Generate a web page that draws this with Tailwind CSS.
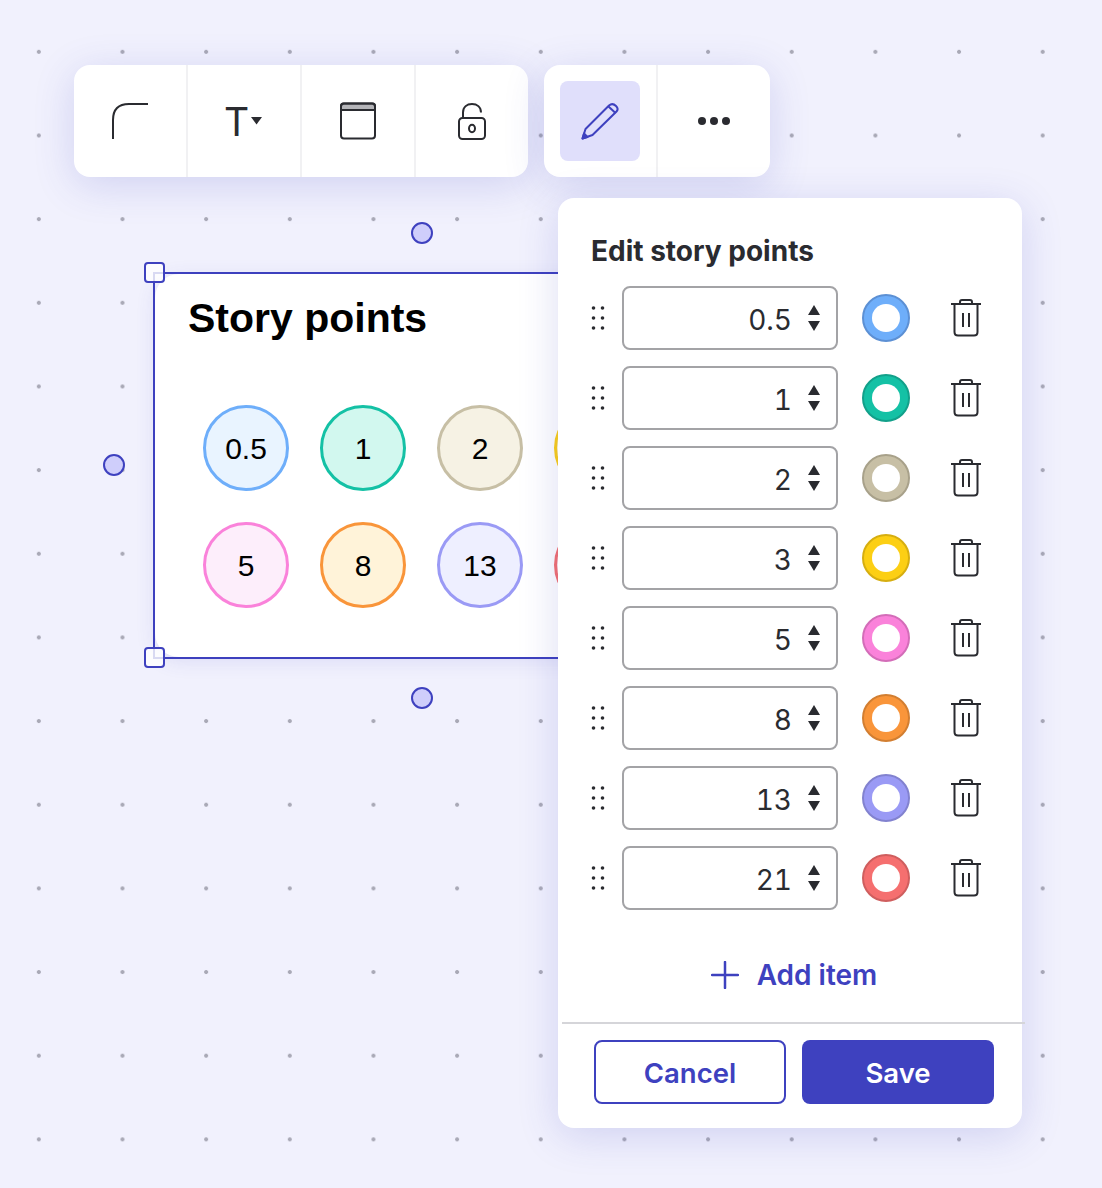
<!DOCTYPE html>
<html lang="en">
<head>
    <meta charset="UTF-8">
    <meta name="viewport" content="width=device-width, initial-scale=1.0">
    <title>Edit story points</title>
    <script src="https://cdn.jsdelivr.net/npm/@tailwindcss/browser@4"></script>
</head>
<body class="bg-[#f1f1fd] font-['Inter',sans-serif] text-[#2a2b30]">

    <!-- Canvas with dot grid -->
    <div class="relative w-[1102px] h-[1188px] overflow-hidden bg-[radial-gradient(circle,#a9a9b6_1.6px,transparent_2.3px)] bg-[size:83.67px_83.67px] bg-[position:-3px_10px]">

        <!-- Selected widget -->
        <div class="absolute left-[153px] top-[272px] w-[538px] h-[387px] border-2 border-[#3e41bf]">
            <div class="h-full bg-white rounded-l-[24px] pl-[33px] pt-[19px] shadow-[0_4px_20px_rgba(62,65,191,0.12)]">
                <h2 class="font-['Liberation_Sans',sans-serif] font-bold text-[41px] leading-[50px] text-black">Story points</h2>
                <div id="circles" class="grid grid-cols-[repeat(4,86px)] gap-x-[31px] gap-y-[31px] ml-[15px] mt-[62px]"></div>
            </div>
        </div>

        <!-- Selection handles -->
        <div class="absolute left-[144px] top-[262px] size-[21px] rounded-[4px] border-2 border-[#3e41bf] bg-white/80"></div>
        <div class="absolute left-[144px] top-[647px] size-[21px] rounded-[4px] border-2 border-[#3e41bf] bg-white/80"></div>
        <div class="absolute left-[411px] top-[222px] size-[22px] rounded-full border-2 border-[#3e41bf] bg-[#cfcefb]"></div>
        <div class="absolute left-[411px] top-[687px] size-[22px] rounded-full border-2 border-[#3e41bf] bg-[#cfcefb]"></div>
        <div class="absolute left-[103px] top-[454px] size-[22px] rounded-full border-2 border-[#3e41bf] bg-[#cfcefb]"></div>

        <!-- Toolbars -->
        <div class="absolute left-[74px] top-[65px] flex gap-4">
            <div class="flex h-[112px] w-[454px] rounded-2xl bg-white shadow-[0_8px_40px_rgba(62,65,191,0.18)]">
                <div class="flex w-[114px] items-center justify-center border-r-2 border-[#f1f1f3]">
                    <svg width="40" height="40" viewBox="0 0 40 40" fill="none" stroke="#2a2b30" stroke-width="2"><path d="M3 38V19Q3 3 19 3H38"/></svg>
                </div>
                <div class="flex w-[114px] items-center justify-center border-r-2 border-[#f1f1f3] pr-[2px]">
                    <span class="text-[39px] leading-none font-normal">T</span>
                    <svg class="ml-[2px]" width="11" height="8" viewBox="0 0 11 8" fill="#2a2b30"><path d="M0 0H11L5.500 7.500Z"/></svg>
                </div>
                <div class="flex w-[114px] items-center justify-center border-r-2 border-[#f1f1f3]">
                    <svg width="38" height="38" viewBox="0 0 38 38" fill="none" stroke="#2a2b30" stroke-width="2"><path d="M2 8V4Q2 1.500 4.500 1.500H33.500Q36 1.500 36 4V8Z" fill="#b5b5b9"/><rect x="2" y="1.500" width="34" height="35" rx="3"/></svg>
                </div>
                <div class="flex flex-1 items-center justify-center">
                    <svg width="30" height="38" viewBox="0 0 30 38" fill="none" stroke="#2a2b30" stroke-width="2"><rect x="2" y="16" width="26" height="21" rx="3.500"/><path d="M6 16V10.500C6 5 10 2 15 2S24 5 24 10.500"/><ellipse cx="15" cy="26.500" rx="3" ry="3.800"/></svg>
                </div>
            </div>
            <div class="flex h-[112px] w-[226px] rounded-2xl bg-white shadow-[0_8px_40px_rgba(62,65,191,0.18)]">
                <div class="flex w-[114px] items-center justify-center border-r-2 border-[#f1f1f3]">
                    <div class="flex size-[80px] items-center justify-center rounded-lg bg-[#e0dffb]">
                        <svg width="38" height="38" viewBox="0 0 38 38" fill="none" stroke="#3e41bf" stroke-width="2" stroke-linejoin="round"><path d="M1.500 36.500L4.500 27L28 3.500Q31.500 0.500 35 4Q38 7 35.500 9.500L11.500 33Z"/><path d="M27.500 4.500L34.500 11"/><path d="M1.500 36.500L6.500 35L3 31.500Z" fill="#3e41bf"/></svg>
                    </div>
                </div>
                <div class="flex flex-1 items-center justify-center gap-[4px] pb-[1px]">
                    <span class="size-[8px] rounded-full bg-[#2a2b30]"></span>
                    <span class="size-[8px] rounded-full bg-[#2a2b30]"></span>
                    <span class="size-[8px] rounded-full bg-[#2a2b30]"></span>
                </div>
            </div>
        </div>

        <!-- Edit panel -->
        <div class="absolute left-[558px] top-[198px] flex h-[930px] w-[464px] flex-col rounded-2xl bg-white pt-[34px] shadow-[0_8px_40px_rgba(62,65,191,0.18)]">
            <h3 class="ml-[33px] text-[28px] leading-[38px] font-bold">Edit story points</h3>
            <div id="rows" class="mt-[16px] flex flex-col gap-4 pl-[33px]"></div>
            <div class="mt-[40px] flex h-[50px] items-center justify-center gap-[18px] pl-[8px] text-[#3e41bf]">
                <svg width="28" height="28" viewBox="0 0 28 28" fill="none" stroke="#3e41bf" stroke-width="2.500" stroke-linecap="round"><path d="M14 1V27M1 14H27"/></svg>
                <span class="text-[28px] leading-none font-semibold">Add item</span>
            </div>
            <div class="mt-[22px] -mr-[3px] ml-[4px] h-[2px] bg-[#d5d5d9]"></div>
            <div class="flex gap-4 pl-[36px] pt-[16px]">
                <button class="h-[64px] w-[192px] shrink-0 rounded-lg border-2 border-[#3e41bf] pt-[3px] text-[27.500px] font-semibold text-[#3e41bf]">Cancel</button>
                <button class="h-[64px] w-[192px] shrink-0 rounded-lg bg-[#3e41bf] pt-[3px] text-[27.500px] font-semibold text-white">Save</button>
            </div>
        </div>
    </div>

    <script>
        // story point values with their ring and fill colours
        const points = [
            { label: '0.5', ring: '#6eaefa', edge: '#5c90d4', fill: '#e9f4ff' },
            { label: '1', ring: '#14c1a5', edge: '#12a08a', fill: '#d2f8ef' },
            { label: '2', ring: '#c7bfa5', edge: '#a8a18a', fill: '#f6f2e4' },
            { label: '3', ring: '#fccf14', edge: '#d6ae10', fill: '#fff8d8' },
            { label: '5', ring: '#fa82da', edge: '#d36db8', fill: '#fdeefb' },
            { label: '8', ring: '#f9953a', edge: '#d27e31', fill: '#fff3d9' },
            { label: '13', ring: '#9a9af5', edge: '#8282cf', fill: '#eeefff' },
            { label: '21', ring: '#f56f6f', edge: '#cf5e5e', fill: '#ffe9e9' },
        ];

        document.getElementById('circles').innerHTML = points.map(p => `
            <div class="flex size-[86px] items-center justify-center rounded-full border-[3px] font-['Liberation_Sans',sans-serif] text-[30px] text-black" style="border-color:${p.ring};background:${p.fill}">${p.label}</div>
        `).join('');

        document.getElementById('rows').innerHTML = points.map(p => `
            <div class="flex h-[64px] items-center">
                <svg class="mr-[17px] shrink-0" width="14" height="30" viewBox="0 0 14 30" fill="#2a2b30"><circle cx="2.500" cy="5" r="1.800"/><circle cx="11.500" cy="5" r="1.800"/><circle cx="2.500" cy="15" r="1.800"/><circle cx="11.500" cy="15" r="1.800"/><circle cx="2.500" cy="25" r="1.800"/><circle cx="11.500" cy="25" r="1.800"/></svg>
                <div class="flex h-[64px] w-[216px] items-center justify-end rounded-lg border-2 border-[#a3a3a6] pr-[15px]">
                    <span class="pt-[3px] text-[28px] leading-none tabular-nums">${p.label}</span>
                    <svg class="ml-[15px]" width="14" height="30" viewBox="0 0 14 30" fill="#2a2b30"><path d="M7 2L13 12H1Z"/><path d="M1 18H13L7 28Z"/></svg>
                </div>
                <div class="ml-[24px] flex size-[48px] items-center justify-center rounded-full border-2" style="background:${p.ring};border-color:${p.edge}">
                    <div class="size-[28px] rounded-full bg-white"></div>
                </div>
                <svg class="ml-[40px]" width="32" height="38" viewBox="0 0 32 38" fill="none" stroke="#2a2b30" stroke-width="2"><path d="M1 5H31"/><path d="M10 5V3Q10 1 12 1H20Q22 1 22 3V5"/><path d="M4.500 5V33Q4.500 36.500 8 36.500H24Q27.500 36.500 27.500 33V5"/><path d="M13 14V28M19 14V28" stroke-width="2"/></svg>
            </div>
        `).join('');
    </script>
</body>
</html>
